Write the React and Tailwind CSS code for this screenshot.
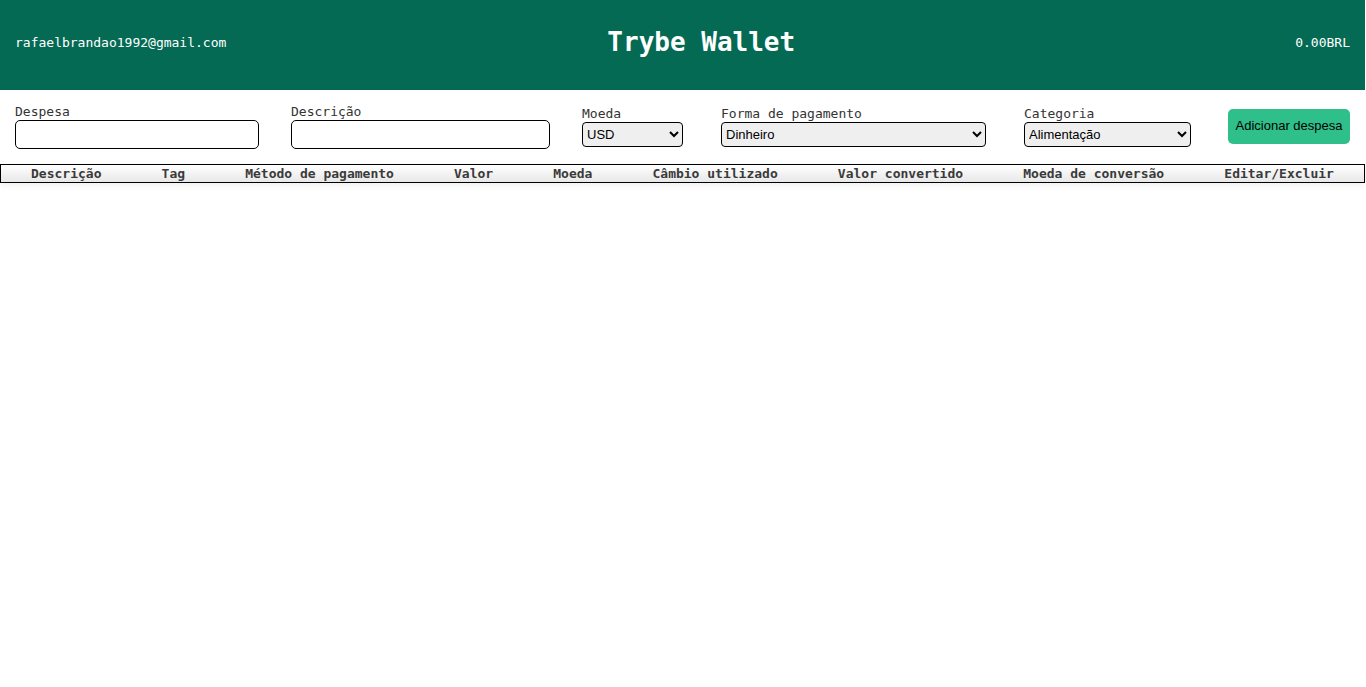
import React from "react";

const mono = { fontFamily: '"DejaVu Sans Mono", monospace' };

export default function App() {
  const cols = [
    "Descrição",
    "Tag",
    "Método de pagamento",
    "Valor",
    "Moeda",
    "Câmbio utilizado",
    "Valor convertido",
    "Moeda de conversão",
    "Editar/Excluir",
  ];
  return (
    <div className="min-h-[687px] bg-white font-['DejaVu_Sans_Mono',monospace]">
      <header className="h-[90px] w-[1365px] bg-[#046a53] text-white flex items-center px-[15px] pb-[5px]">
        <span className="text-[13px] leading-[16px] mt-[1px]">rafaelbrandao1992@gmail.com</span>
        <h1 className="ml-[381px] text-[26px] font-bold leading-[30px] mb-[2px]">Trybe Wallet</h1>
        <span className="ml-auto text-[13px] leading-[16px] mt-[1px]">0.00BRL</span>
      </header>

      <form className="flex items-center w-[1365px] px-[15px] h-[74px] pb-[2px] text-[#333] text-[13px]">
        <label className="flex flex-col leading-[16px]">
          Despesa
          <input className="w-[244px] h-[29px] border border-black rounded-[5px] bg-white" />
        </label>
        <label className="flex flex-col leading-[16px] ml-[32px]">
          Descrição
          <input className="w-[259px] h-[29px] border border-black rounded-[5px] bg-white" />
        </label>
        <label className="flex flex-col leading-[16px] ml-[32px]">
          Moeda
          <select className="w-[101px] h-[25px] border border-black rounded-[4px] bg-[#efefef] text-black text-[13px] font-['Liberation_Sans',Arial,sans-serif]">
            <option>USD</option>
          </select>
        </label>
        <label className="flex flex-col leading-[16px] ml-[38px]">
          Forma de pagamento
          <select className="w-[265px] h-[25px] border border-black rounded-[4px] bg-[#efefef] text-black text-[13px] font-['Liberation_Sans',Arial,sans-serif]">
            <option>Dinheiro</option>
          </select>
        </label>
        <label className="flex flex-col leading-[16px] ml-[38px]">
          Categoria
          <select className="w-[167px] h-[25px] border border-black rounded-[4px] bg-[#efefef] text-black text-[13px] font-['Liberation_Sans',Arial,sans-serif]">
            <option>Alimentação</option>
          </select>
        </label>
        <button
          type="button"
          className="ml-auto w-[122px] h-[35px] rounded-[5px] bg-[#2ebf8a] text-black text-[13px] font-['Liberation_Sans',Arial,sans-serif]"
        >
          Adicionar despesa
        </button>
      </form>

      <table className="border border-black border-collapse w-[1365px] shadow-[0_3px_6px_rgba(0,0,0,0.06)]">
        <thead>
          <tr className="bg-gradient-to-b from-white to-[#e6e6e6]">
            {cols.map((c) => (
              <th
                key={c}
                className="px-[30px] h-[17px] p-0 text-[13px] leading-[17px] font-bold text-[#3a3a3a] whitespace-nowrap"
                style={mono}
              >
                {c}
              </th>
            ))}
          </tr>
        </thead>
      </table>
    </div>
  );
}
